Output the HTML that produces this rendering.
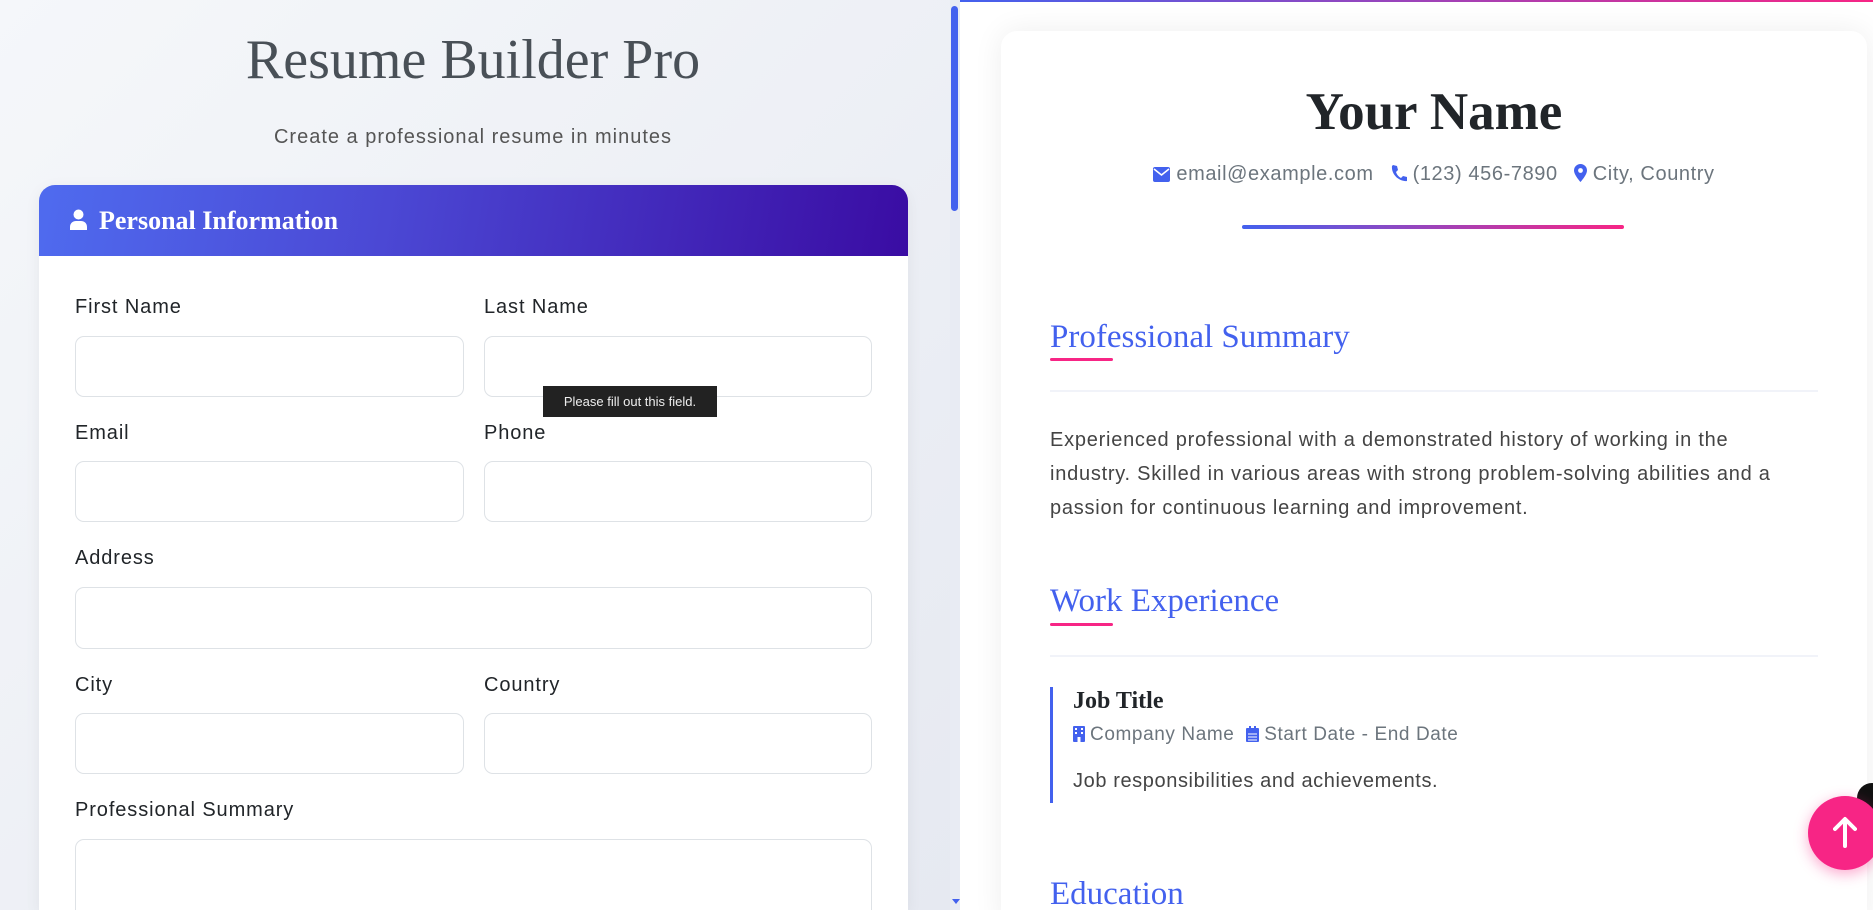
<!DOCTYPE html>
<html style="overflow:hidden;width:1873px;height:910px"><head><meta charset="utf-8"><style>
*{box-sizing:border-box;margin:0;padding:0}
html,body{overflow:hidden}
body{width:1873px;height:910px;position:relative;font-family:"Liberation Sans",sans-serif;background:#fff}
.left{position:absolute;left:0;top:0;width:950px;height:910px;background:linear-gradient(135deg,#f5f7fa,#e6e9f1)}
.sb{position:absolute;left:950px;top:0;width:10px;height:910px;background:#e8ebf3}
.sb i{position:absolute;left:1px;top:6px;width:7px;height:205px;background:#4361ee;border-radius:4px}
.sb b{position:absolute;left:2px;bottom:2px;border:4px solid transparent;border-top:5px solid #4361ee}
h1{position:absolute;left:0;width:946px;top:28px;text-align:center;font-family:"Liberation Serif",serif;font-weight:normal;font-size:56px;color:#495057}
.sub{position:absolute;left:0;width:946px;top:126px;text-align:center;font-size:20px;letter-spacing:1px;color:#555}
.card{position:absolute;left:39px;top:185px;width:869px;height:725px;background:#fff;border-radius:16px 16px 0 0;box-shadow:0 4px 16px rgba(0,0,0,.06);overflow:hidden}
.hd{height:71px;background:linear-gradient(100deg,#4f6bef,#4b48d4 40%,#3a0ca3);color:#fff;font-family:"Liberation Serif",serif;font-weight:bold;font-size:26px;padding:21px 0 0 60px;position:relative}
.lab{position:absolute;font-size:20px;letter-spacing:.9px;color:#212529}
.in{position:absolute;border:1px solid #dee2e6;border-radius:9px;background:#fff}
.tip{position:absolute;left:543px;top:386px;width:174px;height:31px;background:#222;color:#eee;font-size:13px;line-height:31px;text-align:center}
.rtop{position:absolute;left:960px;top:0;width:913px;height:2px;background:linear-gradient(90deg,#4361ee,#f72585)}
.rc{position:absolute;left:1001px;top:31px;width:866px;height:900px;background:#fff;border-radius:16px;box-shadow:0 0 30px rgba(0,0,0,.07)}
.name{position:absolute;left:1001px;width:866px;top:82px;text-align:center;font-family:"Liberation Serif",serif;font-weight:bold;font-size:53px;color:#212529}
.ct{position:absolute;left:1001px;width:866px;top:163px;text-align:center;font-size:20px;letter-spacing:.6px;color:#6c757d}
.ct span{margin:0 8px}
.ct svg{vertical-align:-2px;margin-right:6px}
.gl{position:absolute;left:1242px;top:225px;width:382px;height:4px;border-radius:2px;background:linear-gradient(90deg,#4361ee,#f72585)}
.sh{position:absolute;left:1050px;font-family:"Liberation Serif",serif;font-size:33px;color:#4361ee}
.ul{position:absolute;left:1050px;width:63px;height:3px;background:#f72585;border-radius:2px}
.sep{position:absolute;left:1050px;width:768px;height:2px;background:#f1f3f9}
.p{position:absolute;left:1050px;width:752px;top:423px;font-size:20px;letter-spacing:.75px;line-height:34px;color:#444}
.job{position:absolute;left:1050px;top:687px;height:116px;border-left:3px solid #4361ee;padding-left:20px;width:700px}
.jt{font-family:"Liberation Serif",serif;font-weight:bold;font-size:24px;color:#212529;margin-top:1px}
.jm{font-size:19px;letter-spacing:.6px;color:#6c757d;margin-top:9px}
.jm svg{vertical-align:-2px;margin-right:5px}
.jd{font-size:20px;letter-spacing:.6px;color:#444;margin-top:24px}
.fab{position:absolute;left:1808px;top:796px;width:74px;height:74px;border-radius:50%;background:#f72585;box-shadow:0 4px 14px rgba(247,37,133,.4)}
.blk{position:absolute;left:1857px;top:783px;width:30px;height:54px;border-radius:20px;background:#111}
</style></head><body>
<div class="left"></div>
<div class="sb"><i></i><b></b></div>
<h1>Resume Builder Pro</h1>
<div class="sub">Create a professional resume in minutes</div>
<div class="card">
<div class="hd"><svg style="position:absolute;left:31px;top:24px" width="17" height="21" viewBox="0 0 17 21"><circle cx="8.5" cy="5.5" r="5" fill="#fff"/><path d="M0 21v-3c0-4 3-6 6-6h5c3 0 6 2 6 6v3z" fill="#fff"/></svg>Personal Information</div>
</div>
<div class="lab" style="left:75px;top:296px">First Name</div>
<div class="lab" style="left:484px;top:296px">Last Name</div>
<div class="in" style="left:75px;top:336px;width:389px;height:61px"></div>
<div class="in" style="left:484px;top:336px;width:388px;height:61px"></div>
<div class="lab" style="left:75px;top:422px">Email</div>
<div class="lab" style="left:484px;top:422px">Phone</div>
<div class="in" style="left:75px;top:461px;width:389px;height:61px"></div>
<div class="in" style="left:484px;top:461px;width:388px;height:61px"></div>
<div class="lab" style="left:75px;top:547px">Address</div>
<div class="in" style="left:75px;top:587px;width:797px;height:62px"></div>
<div class="lab" style="left:75px;top:674px">City</div>
<div class="lab" style="left:484px;top:674px">Country</div>
<div class="in" style="left:75px;top:713px;width:389px;height:61px"></div>
<div class="in" style="left:484px;top:713px;width:388px;height:61px"></div>
<div class="lab" style="left:75px;top:799px">Professional Summary</div>
<div class="in" style="left:75px;top:839px;width:797px;height:100px"></div>
<div class="tip">Please fill out this field.</div>

<div class="rtop"></div>
<div class="rc"></div>
<div class="name">Your Name</div>
<div class="ct"><span><svg width="17" height="15" viewBox="0 0 17 15"><rect width="17" height="15" rx="2" fill="#4361ee"/><path d="M1 2l7.5 6L16 2" stroke="#fff" stroke-width="1.6" fill="none"/></svg>email@example.com</span><span><svg width="17" height="18" viewBox="0 0 17 18"><path d="M3 1l4 1 1 4-2 2c1 3 3 5 5 6l2-2 4 1 0 4c-8 1-16-7-15-15z" fill="#4361ee"/></svg>(123) 456-7890</span><span><svg width="13" height="18" viewBox="0 0 13 18"><path d="M6.5 0A6.5 6.5 0 0 0 0 6.5C0 11 6.5 18 6.5 18S13 11 13 6.5A6.5 6.5 0 0 0 6.5 0z" fill="#4361ee"/><circle cx="6.5" cy="6.5" r="2.4" fill="#fff"/></svg>City, Country</span></div>
<div class="gl"></div>
<div class="sh" style="top:319px">Professional Summary</div>
<div class="ul" style="top:358px"></div>
<div class="sep" style="top:390px"></div>
<div class="p">Experienced professional with a demonstrated history of working in the industry. Skilled in various areas with strong problem-solving abilities and a passion for continuous learning and improvement.</div>
<div class="sh" style="top:583px">Work Experience</div>
<div class="ul" style="top:623px"></div>
<div class="sep" style="top:655px"></div>
<div class="job"><div class="jt">Job Title</div>
<div class="jm"><svg width="12" height="16" viewBox="0 0 12 16"><rect width="12" height="16" rx="1" fill="#4361ee"/><rect x="2" y="2" width="2" height="2" fill="#fff"/><rect x="8" y="2" width="2" height="2" fill="#fff"/><rect x="2" y="6" width="2" height="2" fill="#fff"/><rect x="8" y="6" width="2" height="2" fill="#fff"/><rect x="4.5" y="11" width="3" height="5" fill="#fff"/></svg>Company Name &nbsp;<svg width="13" height="16" viewBox="0 0 13 16"><rect y="2" width="13" height="14" rx="1" fill="#4361ee"/><rect x="3" y="0" width="2" height="4" fill="#4361ee"/><rect x="8" y="0" width="2" height="4" fill="#4361ee"/><path d="M2 8h9M2 11h9M2 14h9" stroke="#fff" stroke-width="1"/></svg>Start Date - End Date</div>
<div class="jd">Job responsibilities and achievements.</div></div>
<div class="sh" style="top:876px">Education</div>
<div class="blk"></div>
<div class="fab"><svg style="position:absolute;left:25px;top:20px" width="24" height="32" viewBox="0 0 24 32"><path d="M12 30V4M2 13L12 3l10 10" stroke="#fff" stroke-width="4" fill="none" stroke-linecap="round" stroke-linejoin="round"/></svg></div>
</body></html>
